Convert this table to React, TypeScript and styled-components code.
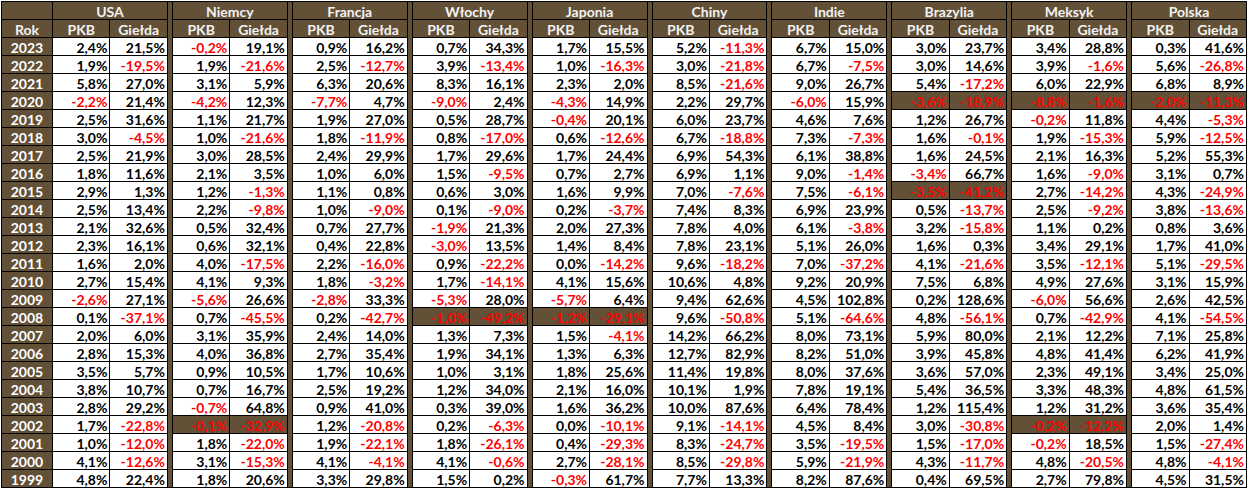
import React from "react";
import styled, { createGlobalStyle } from "styled-components";

const GlobalStyle = createGlobalStyle`
  body {
    margin: 0;
    background: #ffffff;
  }
`;

const BROWN = "#625137";

const Wrapper = styled.div`
  padding: 1px 0 0 1px;
`;

const Table = styled.div`
  display: grid;
  box-sizing: border-box;
  width: 1246px;
  padding: 1px;
  gap: 1px;
  background: #000000;
  grid-template-columns: 50px repeat(9, 1fr 1fr 4px) 1fr 1fr;
  grid-template-rows: repeat(27, 17px);
  font-family: Lato, "Liberation Sans", sans-serif;
  font-size: 14px;
  font-weight: 700;
  line-height: 19px;
`;

const Separator = styled.div<{ $col: number }>`
  grid-column: ${(p) => p.$col};
  grid-row: 1 / -1;
  background: ${BROWN};
`;

const HeadCell = styled.div<{ $span?: number }>`
  grid-column: span ${(p) => p.$span || 1};
  background: ${BROWN};
  color: #f2f2f2;
  text-align: center;
  overflow: hidden;
`;

const YearCell = styled.div`
  background: ${BROWN};
  color: #ffffff;
  text-align: center;
  overflow: hidden;
`;

const Value = styled.div<{ $neg: boolean; $mark: boolean }>`
  background: ${(p) => (p.$mark ? BROWN : "#ffffff")};
  color: ${(p) => (p.$neg ? "#ff0000" : "#000000")};
  text-align: right;
  padding-right: 2px;
  overflow: hidden;
  white-space: nowrap;
`;

const countries = [
  "USA",
  "Niemcy",
  "Francja",
  "Włochy",
  "Japonia",
  "Chiny",
  "Indie",
  "Brazylia",
  "Meksyk",
  "Polska",
];

// rok, potem PKB i Giełda dla każdego kraju
const raw = `
2023 2,4 21,5 -0,2 19,1 0,9 16,2 0,7 34,3 1,7 15,5 5,2 -11,3 6,7 15,0 3,0 23,7 3,4 28,8 0,3 41,6
2022 1,9 -19,5 1,9 -21,6 2,5 -12,7 3,9 -13,4 1,0 -16,3 3,0 -21,8 6,7 -7,5 3,0 14,6 3,9 -1,6 5,6 -26,8
2021 5,8 27,0 3,1 5,9 6,3 20,6 8,3 16,1 2,3 2,0 8,5 -21,6 9,0 26,7 5,4 -17,2 6,0 22,9 6,8 8,9
2020 -2,2 21,4 -4,2 12,3 -7,7 4,7 -9,0 2,4 -4,3 14,9 2,2 29,7 -6,0 15,9 -3,6 -18,9 -8,8 -1,6 -2,0 -11,3
2019 2,5 31,6 1,1 21,7 1,9 27,0 0,5 28,7 -0,4 20,1 6,0 23,7 4,6 7,6 1,2 26,7 -0,2 11,8 4,4 -5,3
2018 3,0 -4,5 1,0 -21,6 1,8 -11,9 0,8 -17,0 0,6 -12,6 6,7 -18,8 7,3 -7,3 1,6 -0,1 1,9 -15,3 5,9 -12,5
2017 2,5 21,9 3,0 28,5 2,4 29,9 1,7 29,6 1,7 24,4 6,9 54,3 6,1 38,8 1,6 24,5 2,1 16,3 5,2 55,3
2016 1,8 11,6 2,1 3,5 1,0 6,0 1,5 -9,5 0,7 2,7 6,9 1,1 9,0 -1,4 -3,4 66,7 1,6 -9,0 3,1 0,7
2015 2,9 1,3 1,2 -1,3 1,1 0,8 0,6 3,0 1,6 9,9 7,0 -7,6 7,5 -6,1 -3,5 -41,2 2,7 -14,2 4,3 -24,9
2014 2,5 13,4 2,2 -9,8 1,0 -9,0 0,1 -9,0 0,2 -3,7 7,4 8,3 6,9 23,9 0,5 -13,7 2,5 -9,2 3,8 -13,6
2013 2,1 32,6 0,5 32,4 0,7 27,7 -1,9 21,3 2,0 27,3 7,8 4,0 6,1 -3,8 3,2 -15,8 1,1 0,2 0,8 3,6
2012 2,3 16,1 0,6 32,1 0,4 22,8 -3,0 13,5 1,4 8,4 7,8 23,1 5,1 26,0 1,6 0,3 3,4 29,1 1,7 41,0
2011 1,6 2,0 4,0 -17,5 2,2 -16,0 0,9 -22,2 0,0 -14,2 9,6 -18,2 7,0 -37,2 4,1 -21,6 3,5 -12,1 5,1 -29,5
2010 2,7 15,4 4,1 9,3 1,8 -3,2 1,7 -14,1 4,1 15,6 10,6 4,8 9,2 20,9 7,5 6,8 4,9 27,6 3,1 15,9
2009 -2,6 27,1 -5,6 26,6 -2,8 33,3 -5,3 28,0 -5,7 6,4 9,4 62,6 4,5 102,8 0,2 128,6 -6,0 56,6 2,6 42,5
2008 0,1 -37,1 0,7 -45,5 0,2 -42,7 -1,0 -49,2 -1,2 -29,1 9,6 -50,8 5,1 -64,6 4,8 -56,1 0,7 -42,9 4,1 -54,5
2007 2,0 6,0 3,1 35,9 2,4 14,0 1,3 7,3 1,5 -4,1 14,2 66,2 8,0 73,1 5,9 80,0 2,1 12,2 7,1 25,8
2006 2,8 15,3 4,0 36,8 2,7 35,4 1,9 34,1 1,3 6,3 12,7 82,9 8,2 51,0 3,9 45,8 4,8 41,4 6,2 41,9
2005 3,5 5,7 0,9 10,5 1,7 10,6 1,0 3,1 1,8 25,6 11,4 19,8 8,0 37,6 3,6 57,0 2,3 49,1 3,4 25,0
2004 3,8 10,7 0,7 16,7 2,5 19,2 1,2 34,0 2,1 16,0 10,1 1,9 7,8 19,1 5,4 36,5 3,3 48,3 4,8 61,5
2003 2,8 29,2 -0,7 64,8 0,9 41,0 0,3 39,0 1,6 36,2 10,0 87,6 6,4 78,4 1,2 115,4 1,2 31,2 3,6 35,4
2002 1,7 -22,8 -0,1 -32,9 1,2 -20,8 0,2 -6,3 0,0 -10,1 9,1 -14,1 4,5 8,4 3,0 -30,8 -0,2 -12,2 2,0 1,4
2001 1,0 -12,0 1,8 -22,0 1,9 -22,1 1,8 -26,1 0,4 -29,3 8,3 -24,7 3,5 -19,5 1,5 -17,0 -0,2 18,5 1,5 -27,4
2000 4,1 -12,6 3,1 -15,3 4,1 -4,1 4,1 -0,6 2,7 -28,1 8,5 -29,8 5,9 -21,9 4,3 -11,7 4,8 -20,5 4,8 -4,1
1999 4,8 22,4 1,8 20,6 3,3 29,8 1,5 0,2 -0,3 61,7 7,7 13,3 8,2 87,6 0,4 69,5 2,7 79,8 4,5 31,5
`;

// wyróżnione komórki: rok:indeks kraju
const marked = new Set([
  "2020:7",
  "2020:8",
  "2020:9",
  "2015:7",
  "2008:3",
  "2008:4",
  "2002:1",
  "2002:8",
]);

const rows = raw
  .trim()
  .split("\n")
  .map((line) => {
    const [year, ...values] = line.trim().split(/\s+/);
    return { year, values };
  });

export default function App() {
  return (
    <Wrapper>
      <GlobalStyle />
      <Table>
        {countries.slice(1).map((_, i) => (
          <Separator key={"sep" + i} $col={4 + i * 3} />
        ))}

        <HeadCell />
        {countries.map((c) => (
          <HeadCell key={c} $span={2}>
            {c}
          </HeadCell>
        ))}

        <HeadCell>Rok</HeadCell>
        {countries.map((c) => (
          <React.Fragment key={"h" + c}>
            <HeadCell>PKB</HeadCell>
            <HeadCell>Giełda</HeadCell>
          </React.Fragment>
        ))}

        {rows.map((row) => (
          <React.Fragment key={row.year}>
            <YearCell>{row.year}</YearCell>
            {row.values.map((v, i) => (
              <Value
                key={i}
                $neg={v.startsWith("-")}
                $mark={marked.has(row.year + ":" + Math.floor(i / 2))}
              >
                {v}%
              </Value>
            ))}
          </React.Fragment>
        ))}
      </Table>
    </Wrapper>
  );
}
